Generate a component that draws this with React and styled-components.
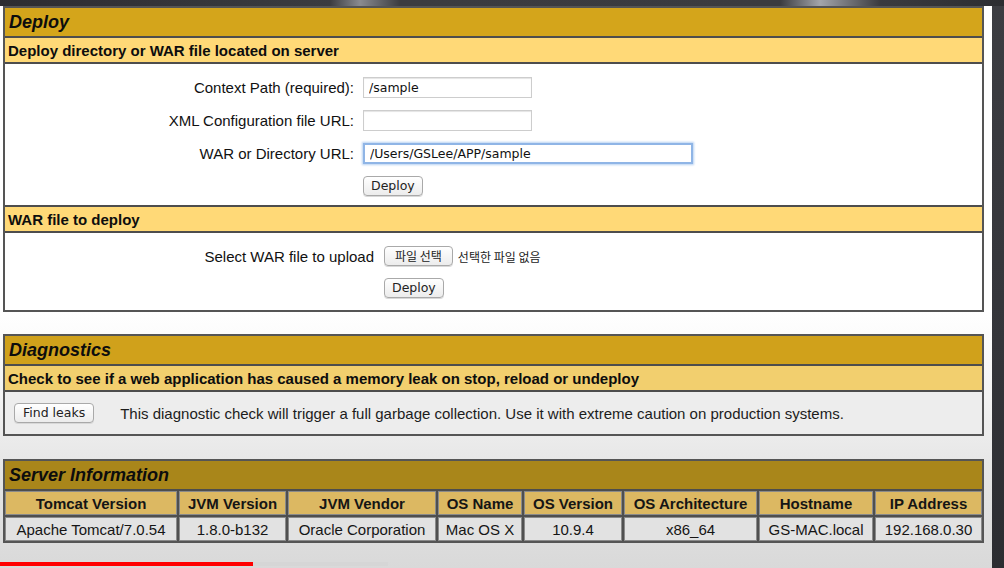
import React from 'react';
import styled, { createGlobalStyle } from 'styled-components';

const GlobalStyle = createGlobalStyle`
  html, body {
    margin: 0;
    padding: 0;
    background: #2f3034;
  }
  body {
    font-family: "Liberation Sans", Arial, sans-serif;
    color: #111;
  }
`;

const Frame = styled.div`
  position: relative;
  display: flex;
  flex-direction: column;
  width: 1004px;
  height: 568px;
  overflow: hidden;
  background: #2f3034;
`;

const TopStrip = styled.div`
  height: 6px;
  flex: none;
  background: linear-gradient(to right, #2c2d31 0, #3b3c40 330px, #8a8b90 360px, #3b3c40 400px, #3a3b3f 780px, #a3a5aa 820px, #3a3b3f 880px, #2c2d31 100%);
`;

const Screen = styled.div`
  display: flex;
  flex: 1;
`;

const Page = styled.div`
  flex: 1;
  padding: 0 8px 0 3px;
  background: linear-gradient(to bottom, #fff 0, #fff 305px, #f3f3f3 390px, #e7e7e7 455px, #d9d9d9 562px);
`;

const SideStrip = styled.div`
  width: 12px;
  flex: none;
  background: linear-gradient(to bottom, #3c3d42, #34353a 60%, #2c2d31);
`;

const Panel = styled.div`
  border: 2px solid #555;
  margin-bottom: ${p => p.$gap || 0}px;
  background: ${p => p.$bg || '#fff'};
`;

const TitleBar = styled.div`
  height: 28px;
  display: flex;
  align-items: center;
  padding-left: 4px;
  background: ${p => p.$tone || '#d4a51b'};
  border-bottom: 2px solid #4d4d4d;
  font-weight: bold;
  font-style: italic;
  font-size: 18px;
  color: #0d0d0d;
`;

const SubBar = styled.div`
  height: 24px;
  display: flex;
  align-items: center;
  padding-left: 3px;
  background: ${p => p.$tone || '#ffd977'};
  border-bottom: 2px solid #4d4d4d;
  font-weight: bold;
  font-size: 15px;
  color: #0d0d0d;
`;

const FormGrid = styled.div`
  display: grid;
  grid-template-columns: ${p => p.$labelWidth}px 1fr;
  column-gap: ${p => p.$colGap}px;
  row-gap: 12px;
  align-items: center;
  padding: 13px 0 ${p => p.$bottom}px;
  border-bottom: ${p => (p.$divided ? '2px solid #4d4d4d' : 'none')};
`;

const Label = styled.div`
  text-align: right;
  font-size: 15px;
  color: #111;
`;

const Field = styled.div`
  display: flex;
  align-items: center;
  gap: 5px;
`;

const TextInput = styled.input`
  box-sizing: border-box;
  width: ${p => (p.$wide ? 330 : 169)}px;
  height: 21px;
  padding: 0 5px;
  border: ${p => (p.$focus ? '2px solid #8fb5e6' : '1px solid #cdcdcd')};
  box-shadow: ${p => (p.$focus ? '0 0 2px 1px #b8d2f2' : 'inset 0 1px 1px #e4e4e4')};
  outline: none;
  background: #fff;
  font-family: "DejaVu Sans", Verdana, sans-serif;
  font-size: 12.5px;
  color: #111;
`;

const Button = styled.button`
  box-sizing: border-box;
  height: 20px;
  padding: 0 ${p => p.$pad || 7}px;
  border: 1px solid #a9a9a9;
  border-radius: 4px;
  background: linear-gradient(to bottom, #ffffff, #ececec);
  box-shadow: 0 1px 0 #d8d8d8;
  font-family: ${p => (p.$cjk ? '"Noto Sans CJK KR", sans-serif' : '"DejaVu Sans", Verdana, sans-serif')};
  font-size: ${p => (p.$cjk ? 12 : 12.5)}px;
  color: #222;
  line-height: 1;
`;

const FileNote = styled.span`
  font-family: "Noto Sans CJK KR", sans-serif;
  font-size: 12px;
  color: #222;
`;

const DiagBody = styled.div`
  display: flex;
  align-items: center;
  gap: 26px;
  height: 42px;
  padding-left: 9px;
  font-size: 15px;
  color: #1c1c1c;
`;

const InfoGrid = styled.div`
  display: grid;
  grid-template-columns: 172fr 107fr 148fr 84fr 98fr 133fr 114fr 107fr;
  gap: 2px;
  background: #4f4f4f;
`;

const Cell = styled.div`
  height: 24px;
  display: flex;
  align-items: center;
  justify-content: center;
  box-shadow: inset 0 0 0 1px #8a8a8a;
  background: ${p => (p.$head ? '#dcb862' : '#e2e2e2')};
  font-weight: ${p => (p.$head ? 'bold' : 'normal')};
  font-size: 15px;
  color: #151515;
  white-space: nowrap;
`;

const ProgressTrack = styled.div`
  position: absolute;
  left: 0;
  right: 0;
  bottom: 2px;
  height: 4px;
  display: flex;
`;

const Played = styled.div`
  width: 253px;
  background: #ff0000;
`;

const Buffered = styled.div`
  width: 135px;
  background: #d6d6d6;
`;

const headers = ['Tomcat Version', 'JVM Version', 'JVM Vendor', 'OS Name', 'OS Version', 'OS Architecture', 'Hostname', 'IP Address'];
const values = ['Apache Tomcat/7.0.54', '1.8.0-b132', 'Oracle Corporation', 'Mac OS X', '10.9.4', 'x86_64', 'GS-MAC.local', '192.168.0.30'];

export default function App() {
  return (
    <Frame>
      <GlobalStyle />
      <TopStrip />
      <Screen>
        <Page>
          <Panel $gap={22}>
            <TitleBar>Deploy</TitleBar>
            <SubBar>Deploy directory or WAR file located on server</SubBar>
            <FormGrid $labelWidth={349} $colGap={9} $bottom={9} $divided>
              <Label>Context Path (required):</Label>
              <Field><TextInput defaultValue="/sample" /></Field>
              <Label>XML Configuration file URL:</Label>
              <Field><TextInput defaultValue="" /></Field>
              <Label>WAR or Directory URL:</Label>
              <Field><TextInput $wide $focus defaultValue="/Users/GSLee/APP/sample" /></Field>
              <span />
              <Field><Button>Deploy</Button></Field>
            </FormGrid>
            <SubBar>WAR file to deploy</SubBar>
            <FormGrid $labelWidth={369} $colGap={10} $bottom={12}>
              <Label>Select WAR file to upload</Label>
              <Field>
                <Button $cjk $pad={10}>파일 선택</Button>
                <FileNote>선택한 파일 없음</FileNote>
              </Field>
              <span />
              <Field><Button>Deploy</Button></Field>
            </FormGrid>
          </Panel>

          <Panel $gap={23} $bg="#ededed">
            <TitleBar $tone="#d0a11b">Diagnostics</TitleBar>
            <SubBar $tone="#f2cf6e">Check to see if a web application has caused a memory leak on stop, reload or undeploy</SubBar>
            <DiagBody>
              <Button $pad={8}>Find leaks</Button>
              <span>This diagnostic check will trigger a full garbage collection. Use it with extreme caution on production systems.</span>
            </DiagBody>
          </Panel>

          <Panel $bg="#4f4f4f">
            <TitleBar $tone="#a9861a">Server Information</TitleBar>
            <InfoGrid>
              {headers.map(h => <Cell $head key={h}>{h}</Cell>)}
              {values.map(v => <Cell key={v}>{v}</Cell>)}
            </InfoGrid>
          </Panel>
        </Page>
        <SideStrip />
      </Screen>
      <ProgressTrack>
        <Played />
        <Buffered />
      </ProgressTrack>
    </Frame>
  );
}
